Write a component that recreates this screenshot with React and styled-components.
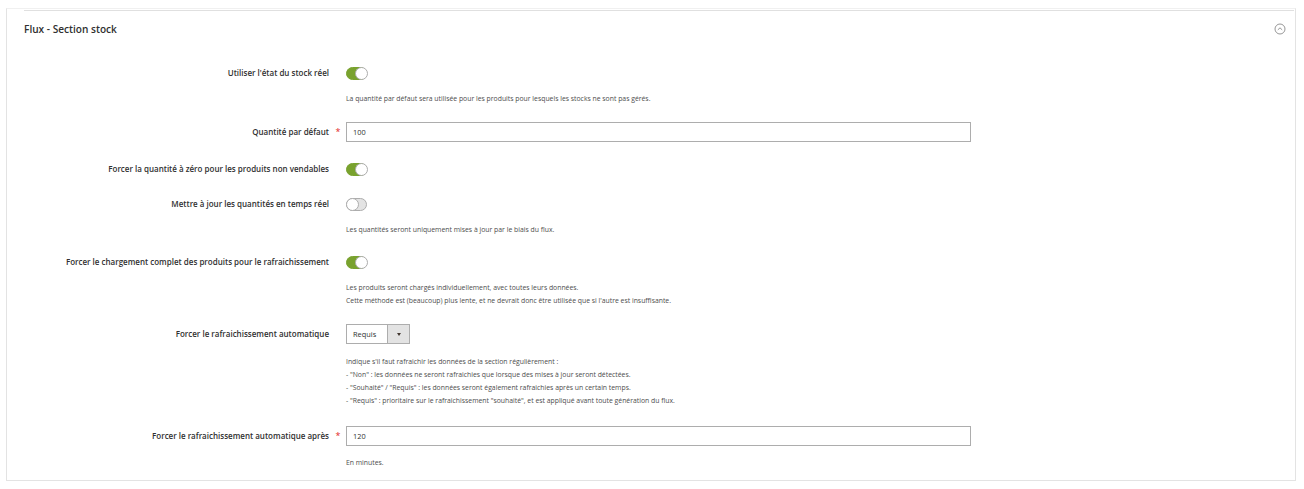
import React from "react";
import styled, {createGlobalStyle} from "styled-components";

const GlobalStyle = createGlobalStyle`
  html, body {
    margin: 0;
    padding: 0;
    background: #ffffff;
    font-family: "Open Sans", "Liberation Sans", sans-serif;
    color: #303030;
  }
`;

const Page = styled.div`
  padding: 8px 8px 10px 6px;
`;

const Card = styled.section`
  border: 1px solid #e3e3e3;
  border-top-color: #f0f0f0;
  padding: 1px 1px 11px 0;
`;

const Header = styled.div`
  margin-left: 17px;
  border-top: 1px solid #e0e0e0;
  display: flex;
  align-items: center;
  justify-content: space-between;
  height: 35px;
  padding-right: 8px;
`;

const Title = styled.h2`
  margin: 0;
  font-size: 10.1px;
  font-weight: 600;
  color: #303030;
`;

const Body = styled.div`
  padding-top: 17px;
  display: flex;
  flex-direction: column;
`;

const Field = styled.div`
  display: grid;
  grid-template-columns: 322px 17px 625px;
  align-items: center;
  margin-top: ${p => p.$space || 0}px;
`;

const Label = styled.label`
  text-align: right;
  font-size: 8px;
  font-weight: 600;
  color: #303030;
  line-height: 20px;
`;

const Required = styled.span`
  color: #e22626;
  font-size: 9px;
  text-align: center;
  padding-left: 1px;
  line-height: 20px;
`;

const Control = styled.div`
  height: 20px;
  display: flex;
  align-items: center;
`;

const Notes = styled.div`
  grid-column: 3;
  margin-top: ${p => p.$gap || 9}px;
  font-size: 6.85px;
  line-height: 13px;
  color: #4d4d4d;
`;

const Input = styled.input`
  box-sizing: border-box;
  width: 625px;
  height: 20px;
  border: 1px solid #adadad;
  padding: 0 6px;
  font-family: inherit;
  font-size: 7.4px;
  color: #303030;
  outline: none;
`;

const Track = styled.span`
  position: relative;
  display: inline-block;
  box-sizing: border-box;
  width: 21px;
  height: 13px;
  border-radius: 7px;
  background: ${p => (p.$on ? "#79a22e" : "#e3e3e3")};
  border: 1px solid ${p => (p.$on ? "#79a22e" : "#adadad")};
`;

const Knob = styled.span`
  position: absolute;
  top: -1px;
  left: ${p => (p.$on ? "8px" : "-1px")};
  box-sizing: border-box;
  width: 13px;
  height: 13px;
  border-radius: 50%;
  background: #ffffff;
  border: 1px solid #adadad;
`;

const Select = styled.div`
  box-sizing: border-box;
  width: 64px;
  height: 20px;
  border: 1px solid #adadad;
  display: flex;
  align-items: stretch;
  font-size: 7.4px;
  color: #303030;
`;

const SelectValue = styled.span`
  flex: 1;
  display: flex;
  align-items: center;
  padding-left: 6px;
`;

const SelectButton = styled.span`
  width: 21px;
  background: #e3e3e3;
  border-left: 1px solid #adadad;
  display: flex;
  align-items: center;
  justify-content: center;
  &::after {
    content: "";
    border-left: 2.5px solid transparent;
    border-right: 2.5px solid transparent;
    border-top: 3px solid #41362f;
  }
`;

const Toggle = ({on}) => (
  <Track $on={on}>
    <Knob $on={on}/>
  </Track>
);

const CollapseIcon = () => (
  <svg width="12" height="12" viewBox="0 0 12 12">
    <circle cx="6" cy="6" r="5" fill="none" stroke="#8a8a8a" strokeWidth="0.9"/>
    <path d="M3.8 6.9 L6 4.8 L8.2 6.9" fill="none" stroke="#8a8a8a" strokeWidth="0.9"/>
  </svg>
);

const Row = ({label, required, children, notes, gap, space}) => (
  <Field $space={space}>
    <Label>{label}</Label>
    <Required>{required ? "*" : ""}</Required>
    <Control>{children}</Control>
    {notes && (
      <Notes $gap={gap}>
        {notes.map(n => <div key={n}>{n}</div>)}
      </Notes>
    )}
  </Field>
);

export default function App() {
  return (
    <Page>
      <GlobalStyle/>
      <Card>
        <Header>
          <Title>Flux - Section stock</Title>
          <CollapseIcon/>
        </Header>
        <Body>
          <Row
            label="Utiliser l'état du stock réel"
            notes={["La quantité par défaut sera utilisée pour les produits pour lesquels les stocks ne sont pas gérés."]}
          >
            <Toggle on/>
          </Row>
          <Row label="Quantité par défaut" required space={17}>
            <Input defaultValue="100"/>
          </Row>
          <Row label="Forcer la quantité à zéro pour les produits non vendables" space={17}>
            <Toggle on/>
          </Row>
          <Row
            label="Mettre à jour les quantités en temps réel"
            space={15}
            notes={["Les quantités seront uniquement mises à jour par le biais du flux."]}
          >
            <Toggle/>
          </Row>
          <Row
            label="Forcer le chargement complet des produits pour le rafraichissement"
            space={16}
            notes={[
              "Les produits seront chargés individuellement, avec toutes leurs données.",
              "Cette méthode est (beaucoup) plus lente, et ne devrait donc être utilisée que si l'autre est insuffisante.",
            ]}
          >
            <Toggle on/>
          </Row>
          <Row
            label="Forcer le rafraichissement automatique"
            space={17}
            gap={11}
            notes={[
              "Indique s'il faut rafraichir les données de la section régulièrement :",
              "- \"Non\" : les données ne seront rafraichies que lorsque des mises à jour seront détectées.",
              "- \"Souhaité\" / \"Requis\" : les données seront également rafraichies après un certain temps.",
              "- \"Requis\" : prioritaire sur le rafraichissement \"souhaité\", et est appliqué avant toute génération du flux.",
            ]}
          >
            <Select>
              <SelectValue>Requis</SelectValue>
              <SelectButton/>
            </Select>
          </Row>
          <Row
            label="Forcer le rafraichissement automatique après"
            required
            space={19}
            gap={10}
            notes={["En minutes."]}
          >
            <Input defaultValue="120"/>
          </Row>
        </Body>
      </Card>
    </Page>
  );
}
